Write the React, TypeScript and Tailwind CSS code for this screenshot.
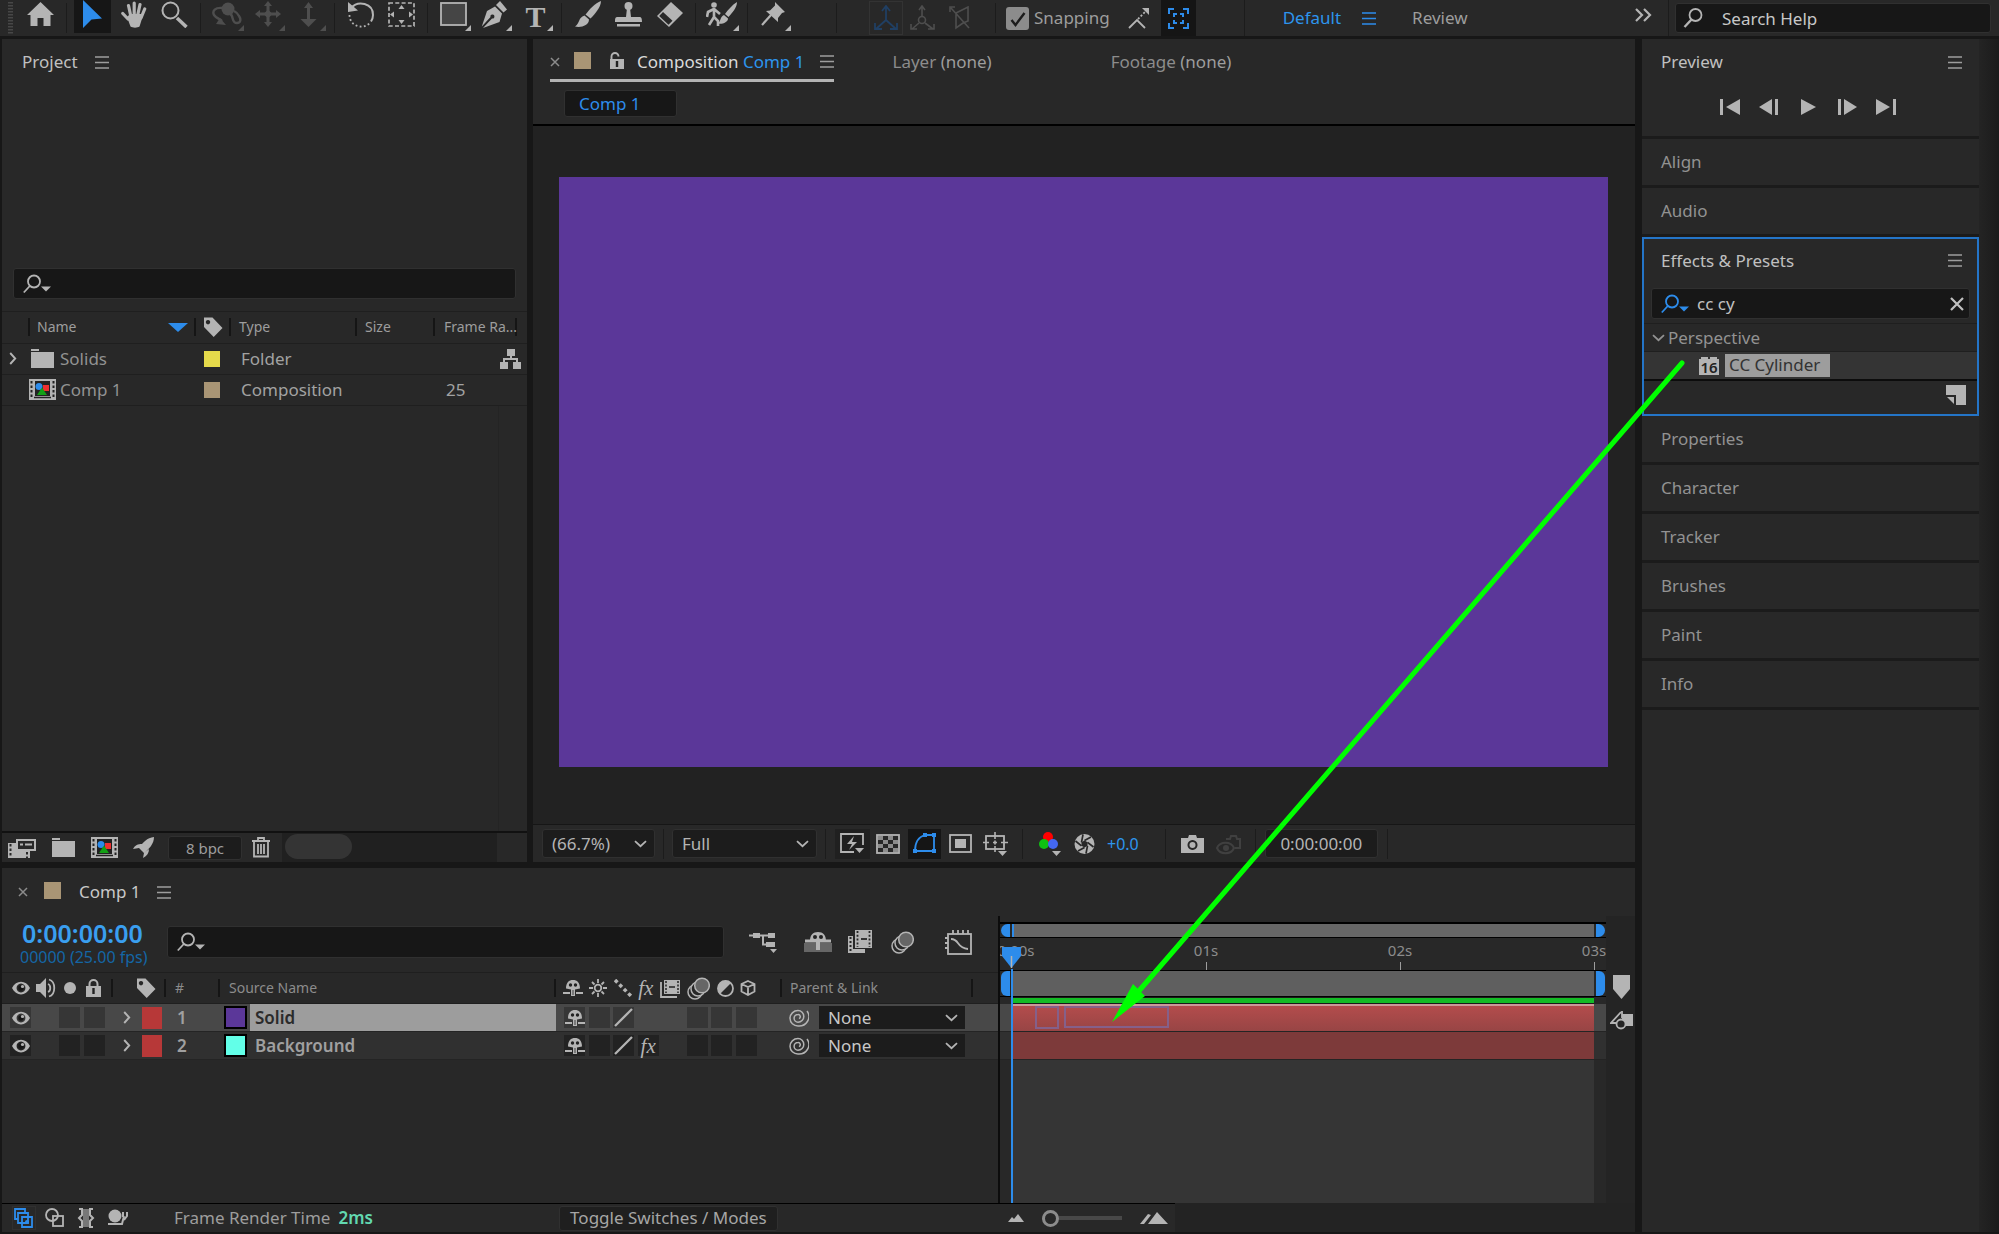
import clsx from 'clsx'
import { useState } from 'react'

type IconProps = {
  w: number
  h: number
  className?: string
  children: React.ReactNode
}

function Icon({ w, h, className, children }: IconProps) {
  return (
    <svg
      width={w}
      height={h}
      viewBox={`0 0 ${w} ${h}`}
      fill="none"
      stroke="none"
      className={clsx('shrink-0', className)}
      aria-hidden="true"
    >
      {children}
    </svg>
  )
}

const menuIcon = (
  <Icon w={14} h={13}>
    <path d="M0 1h14M0 6.5h14M0 12h14" stroke="currentColor" strokeWidth="1.6" />
  </Icon>
)

const chevronDown = (
  <Icon w={13} h={8}>
    <path d="M1 1.2l5.5 5 5.5-5" stroke="currentColor" strokeWidth="1.8" />
  </Icon>
)

const chevronRight = (
  <Icon w={8} h={13}>
    <path d="M1.2 1l5 5.5-5 5.5" stroke="currentColor" strokeWidth="1.9" />
  </Icon>
)

const searchIcon = (
  <Icon w={28} h={20}>
    <circle cx="11" cy="7.5" r="6" stroke="currentColor" strokeWidth="1.8" />
    <path d="M6.8 12L.8 18.5" stroke="currentColor" strokeWidth="1.8" />
    <path d="M18 12.5h10l-5 5z" fill="currentColor" />
  </Icon>
)

const closeIcon = (
  <Icon w={10} h={10}>
    <path d="M1 1l8 8M9 1L1 9" stroke="currentColor" strokeWidth="1.5" />
  </Icon>
)

const tagIcon = (
  <Icon w={20} h={20}>
    <path
      d="M1 .5h8.5L19.5 11l-8.800 9L1 10z M5 3a2.200 2.200 0 1 0 .01 0z"
      fill="currentColor"
      fillRule="evenodd"
    />
  </Icon>
)

const eyeIcon = (
  <Icon w={18} h={14}>
    <path
      d="M0 7C4-1.500 14-1.500 18 7C14 15.500 4 15.500 0 7z M9 2.600a4.400 4.400 0 1 0 .01 0z"
      fill="currentColor"
      fillRule="evenodd"
    />
    <path d="M9 4.300a2.700 2.700 0 1 0 2.700 2.700h-2.700z" fill="#161616" />
    <circle cx="10.500" cy="5.500" r="1.600" fill="currentColor" />
  </Icon>
)

const folderIcon = (
  <Icon w={23} h={19}>
    <path d="M0 0h8v2H0zM0 3h23v16H0z" fill="currentColor" />
  </Icon>
)

const compIcon = (
  <Icon w={27} h={21}>
    <rect width="27" height="21" fill="#b4b4b4" />
    <path d="M2.500 2v18M24.500 2v18" stroke="#222" strokeWidth="2" strokeDasharray="2.500 2" />
    <rect x="6" y="2" width="15" height="15" fill="#222" />
    <rect x="14" y="6" width="6" height="6" fill="#ee3030" />
    <circle cx="10" cy="7.500" r="3.500" fill="#2d8ceb" />
    <path d="M13 8.500l5 7.500H8z" fill="#13a015" />
    <path d="M5 18.500h17" stroke="#222" strokeWidth="1.500" />
  </Icon>
)

const shyIcon = (
  <Icon w={20} h={18}>
    <path
      d="M3 9.500C3 3.500 6 1 10 1s7 2.500 7 8.500l-5 1V17H8v-6.500z"
      fill="currentColor"
    />
    <circle cx="7.500" cy="6" r="1.700" fill="#222" />
    <circle cx="12.500" cy="6" r="1.700" fill="#222" />
    <path d="M10 11v5" stroke="#222" strokeWidth=".8" />
    <path d="M0 14h7M13 14h7" stroke="currentColor" strokeWidth="2" />
  </Icon>
)

const fxIcon = (
  <span className="font-['Liberation_Serif',serif] text-[21px] italic leading-[20px]">fx</span>
)

const framesIcon = (
  <Icon w={21} h={19}>
    <path d="M1 3v15h16" stroke="currentColor" strokeWidth="1.800" />
    <rect x="4" y="1" width="16" height="14" fill="currentColor" />
    <path d="M6 2v12M18 2v12" stroke="#222" strokeWidth="1.500" strokeDasharray="2 1.500" />
    <path d="M9 8h6" stroke="#222" strokeWidth="1.500" />
  </Icon>
)

const motionIcon = (
  <Icon w={23} h={23}>
    <circle cx="8" cy="15" r="7" fill="#282828" stroke="currentColor" strokeWidth="1.500" />
    <circle cx="11" cy="12" r="7" fill="#282828" stroke="currentColor" strokeWidth="1.500" />
    <circle cx="15" cy="8.500" r="7.300" fill="#666" stroke="currentColor" strokeWidth="1.500" />
  </Icon>
)

const slashIcon = (
  <Icon w={19} h={19}>
    <path d="M1 18L18 1" stroke="currentColor" strokeWidth="2.300" />
  </Icon>
)

const whipIcon = (
  <Icon w={20} h={18}>
    <path
      d="M18 2A10 9.500 0 0 1 9 17A8 7.700 0 0 1 9 1.600A5.800 5.800 0 0 1 9 13.200A3.900 3.900 0 0 1 9 5.400A2.200 2.200 0 0 1 10 9.600"
      stroke="currentColor"
      strokeWidth="1.500"
    />
  </Icon>
)

type ToolButtonProps = {
  label: string
  active?: boolean
  disabled?: boolean
  flyout?: boolean
  children: React.ReactNode
}

function ToolButton({ label, active, disabled, flyout, children }: ToolButtonProps) {
  return (
    <button
      type="button"
      aria-label={label}
      disabled={disabled}
      className={clsx(
        'relative flex h-[36px] w-[41px] shrink-0 items-center justify-center pb-2',
        disabled ? 'text-[#4e4e4e]' : 'text-[#b4b4b4]',
      )}
    >
      {active && <span className="absolute inset-x-[2px] top-0 bottom-[3px] bg-[#161616]" />}
      <span className="relative">{children}</span>
      {flyout && (
        <span className="absolute right-[3px] bottom-[5px]">
          <Icon w={6} h={6}>
            <path d="M6 0v6H0z" fill="currentColor" />
          </Icon>
        </span>
      )}
    </button>
  )
}

function Divider({ className }: { className?: string }) {
  return <span className={clsx('h-[30px] w-px shrink-0 bg-[#1c1c1c]', className ?? 'mx-[5px]')} />
}

function Toolbar() {
  const [snapping, setSnapping] = useState(true)

  return (
    <header className="flex h-[36px] items-center bg-[#282828] text-[17px]">
      <span className="ml-2 mr-[7px]">
        <Icon w={5} h={32}>
          <path d="M2.500 0v32" stroke="#474747" strokeWidth="5" strokeDasharray="1.500 1.500" />
        </Icon>
      </span>
      <ToolButton label="Home">
        <Icon w={27} h={26}>
          <path d="M13.500 1L27 14h-3.500v11h-7v-8h-6v8h-7V14H0z" fill="currentColor" />
        </Icon>
      </ToolButton>
      <Divider />
      <ToolButton label="Selection Tool" active>
        <Icon w={19} h={28}>
          <path d="M0 0l19 18.500-10.500 1L0 28z" fill="#2d8ceb" />
        </Icon>
      </ToolButton>
      <ToolButton label="Hand Tool">
        <Icon w={26} h={27}>
          <path
            d="M1.800 12.500L7 18M7.500 4.500L10 16M13.200 2v12M19 3.500L16.500 15M23.700 8L20 17"
            stroke="currentColor"
            strokeWidth="3.200"
            strokeLinecap="round"
          />
          <path d="M6 16l3-3h11l1.500 3-3 9.500c-2 1.500-7 1.500-9 0z" fill="currentColor" />
        </Icon>
      </ToolButton>
      <ToolButton label="Zoom Tool">
        <Icon w={27} h={27}>
          <circle cx="9.500" cy="9.500" r="8" stroke="currentColor" strokeWidth="2" />
          <path d="M16 17l9.500 9" stroke="currentColor" strokeWidth="3.500" />
        </Icon>
      </ToolButton>
      <Divider />
      <ToolButton label="Orbit Tool" disabled flyout>
        <Icon w={30} h={25}>
          <circle cx="16" cy="7" r="6.500" fill="currentColor" />
          <path
            d="M11 6C3 5 0 9 2 13c2 3 6 4 8 6M18 12c4 1 1 9 7 9c4 0 4-4 2-7c-1-2-3-4-5-5"
            stroke="currentColor"
            strokeWidth="2.400"
          />
          <path d="M4 22l4-6 6 7z" fill="currentColor" />
        </Icon>
      </ToolButton>
      <ToolButton label="Pan Camera Tool" disabled flyout>
        <Icon w={26} h={26}>
          <path d="M13 3v20M3 13h20" stroke="currentColor" strokeWidth="3" />
          <path
            d="M13 0l4 5H9zM13 26l-4-5h8zM0 13l5-4v8zM26 13l-5 4V9zM13 8.500l4.500 4.500-4.500 4.500L8.500 13z"
            fill="currentColor"
          />
        </Icon>
      </ToolButton>
      <ToolButton label="Dolly Camera Tool" disabled flyout>
        <Icon w={17} h={25}>
          <path d="M8.500 0l4.500 6H4zM8.500 25l-8-8h16zM7 4h3v14H7z" fill="currentColor" />
        </Icon>
      </ToolButton>
      <Divider />
      <ToolButton label="Rotation Tool">
        <Icon w={28} h={27}>
          <path d="M4 7C11-1 26 2 26 14c0 3-1 5-2 6.500" stroke="currentColor" strokeWidth="2" />
          <path d="M1 1v10l10-1.500z" fill="currentColor" />
          <path
            d="M2.500 14c0 12 15 15 20.500 7.500"
            stroke="currentColor"
            strokeWidth="1.800"
            strokeDasharray="1.800 2.400"
          />
        </Icon>
      </ToolButton>
      <ToolButton label="Pan Behind Tool">
        <Icon w={27} h={25}>
          <rect x="1" y="1" width="25" height="23" stroke="currentColor" strokeWidth="1.700" strokeDasharray="4 2.300" />
          <path d="M13.500 3l3 4h-6zM13.500 22l-3-4h6zM2 12.500l4-3v6zM25 12.500l-4 3v-6z" fill="currentColor" />
        </Icon>
      </ToolButton>
      <Divider />
      <ToolButton label="Rectangle Tool" flyout>
        <Icon w={27} h={24}>
          <rect x="1" y="1" width="25" height="22" fill="#454545" stroke="currentColor" strokeWidth="1.800" />
        </Icon>
      </ToolButton>
      <ToolButton label="Pen Tool" flyout>
        <Icon w={27} h={27}>
          <path d="M19 0l7 8.500-3.500 3L15 4z" fill="currentColor" />
          <path
            d="M14 5.500l7 7L18.500 21 2 27l9-9.500a2 2 0 1 0-1.500-1.500L.8 25.500 6 10z"
            fill="currentColor"
          />
        </Icon>
      </ToolButton>
      <ToolButton label="Type Tool" flyout>
        <span className="block h-[28px] font-['Liberation_Serif',serif] text-[30px] font-bold leading-[34px]">
          T
        </span>
      </ToolButton>
      <Divider />
      <ToolButton label="Brush Tool">
        <Icon w={26} h={26}>
          <path d="M26 0c0 6-6 13-10.500 17.500l-5-4C15 8 20 2 26 0z" fill="currentColor" />
          <path d="M9.500 14.500l4.500 4c0 6-8 8.500-14 7c5-3 3-9 9.500-11z" fill="currentColor" />
        </Icon>
      </ToolButton>
      <ToolButton label="Clone Stamp Tool">
        <Icon w={27} h={25}>
          <circle cx="13.500" cy="4" r="4" fill="currentColor" />
          <path d="M12 6h3l1 9h9c2 0 2 4 2 5H0c0-2 0-5 2-5h9zM2 22h23v2.500H2z" fill="currentColor" />
        </Icon>
      </ToolButton>
      <ToolButton label="Eraser Tool">
        <Icon w={28} h={27}>
          <path d="M15 1l12 11-14 14L1 15z" fill="currentColor" />
          <path d="M7 11l9.500 8.800-4 4L3.200 15z" fill="#282828" />
        </Icon>
      </ToolButton>
      <Divider />
      <ToolButton label="Roto Brush Tool" flyout>
        <Icon w={31} h={25}>
          <circle cx="8" cy="3" r="2.800" fill="currentColor" />
          <path
            d="M8 6v9M8 7l-6 3-1 5M8 7l6 5M8 15l-5 8M8 15l4 4v5"
            stroke="currentColor"
            strokeWidth="2.600"
          />
          <path d="M31 0c0 6-5 11-8.500 15l-3.500-3c3-4 7-9 12-12zM18 13l4 3.500c0 4-6 6-10 5c3-2 2-7 6-8.500z" fill="currentColor" />
        </Icon>
      </ToolButton>
      <Divider />
      <ToolButton label="Puppet Pin Tool" flyout>
        <Icon w={25} h={25}>
          <path d="M14 0l10 10-3 1-4 5 0 4L5 9l4-.5 5-5z" fill="currentColor" />
          <path d="M10 13L1 23" stroke="currentColor" strokeWidth="2.200" />
        </Icon>
      </ToolButton>
      <Divider className="mr-[32px] ml-[42px] w-[3px]" />
      <button
        type="button"
        aria-label="Local Axis Mode"
        className="flex h-[34px] w-[34px] shrink-0 items-center justify-center border border-[#333] text-[#203f63]"
      >
        <Icon w={24} h={26}>
          <path d="M12 2v13L2 24M12 15l10 9M8 6l4-5 4 5M1 18v6h7M23 18v6h-7" stroke="currentColor" strokeWidth="1.800" />
        </Icon>
      </button>
      <button type="button" aria-label="World Axis Mode" className="flex w-[38px] shrink-0 justify-center text-[#4e4e4e]">
        <Icon w={25} h={26}>
          <circle cx="12" cy="15" r="3.500" stroke="currentColor" strokeWidth="1.600" />
          <path d="M12 2v9M9 18l-7 6M15 18l8 6M9 5l3-4 3 4M1 19v5h6M24 19v5h-6" stroke="currentColor" strokeWidth="1.600" />
        </Icon>
      </button>
      <button type="button" aria-label="View Axis Mode" className="flex w-[38px] shrink-0 justify-center text-[#4e4e4e]">
        <Icon w={22} h={24}>
          <path d="M7 7l12-6v14l-5 2M7 7v15l7-5M2 2l18 20M1 6V1h5" stroke="currentColor" strokeWidth="1.600" />
        </Icon>
      </button>
      <Divider className="mr-[10px] ml-[16px]" />
      <label className="flex shrink-0 items-center gap-[5px] text-[#9d9d9d]">
        <span className="relative flex">
          <input
            type="checkbox"
            checked={snapping}
            onChange={(e) => setSnapping(e.target.checked)}
            className="h-[23px] w-[23px] appearance-none rounded-[3px] bg-[#8c8c8c]"
          />
          {snapping && (
            <span className="pointer-events-none absolute top-1 left-1">
              <Icon w={16} h={16}>
                <path d="M1.500 9l4 5L14.500 2" stroke="#1c1c1c" strokeWidth="2.400" />
              </Icon>
            </span>
          )}
        </span>
        Snapping
      </label>
      <button type="button" aria-label="Snap to edges" className="ml-[18px] flex shrink-0 text-[#b4b4b4]">
        <Icon w={22} h={22}>
          <path d="M1 21l8-8 8 8" stroke="currentColor" strokeWidth="1.800" />
          <path d="M10 12l8-8" stroke="currentColor" strokeWidth="1.800" strokeDasharray="2 1.800" />
          <path d="M14 1h7v7z" fill="currentColor" />
        </Icon>
      </button>
      <button
        type="button"
        aria-label="Snap to features"
        className="ml-[11px] flex h-[36px] w-[35px] shrink-0 items-center justify-center bg-[#151515] text-[#2d8ceb]"
      >
        <Icon w={21} h={21}>
          <path
            d="M1 6V1h5M15 1h5v5M20 15v5h-5M6 20H1v-5M6 9V6h3M12 6h3v3M15 12v3h-3M9 15H6v-3"
            stroke="currentColor"
            strokeWidth="2"
          />
        </Icon>
      </button>
      <Divider className="mr-[38px] ml-[48px] h-[36px]" />
      <button type="button" className="shrink-0 text-[#2d95ee]">
        Default
      </button>
      <button type="button" aria-label="Workspace menu" className="ml-[21px] shrink-0 text-[#2d8ceb]">
        {menuIcon}
      </button>
      <button type="button" className="ml-[36px] shrink-0 text-[#9d9d9d]">
        Review
      </button>
      <button type="button" aria-label="More workspaces" className="mr-[16px] ml-auto shrink-0 pb-[6px] text-[#b4b4b4]">
        <Icon w={17} h={14}>
          <path d="M1 1l6 6-6 6M9 1l6 6-6 6" stroke="currentColor" strokeWidth="2.200" />
        </Icon>
      </button>
      <Divider className="mr-[6px] h-[36px] w-[2px]" />
      <label className="mr-2 flex h-[30px] w-[316px] items-center gap-[19px] rounded-[3px] border border-[#303030] bg-[#171717] px-[7px] text-[#c8c8c8]">
        <Icon w={20} h={20}>
          <circle cx="12.500" cy="7" r="6" stroke="#b4b4b4" strokeWidth="1.800" />
          <path d="M8.500 11.500L1.500 19" stroke="#b4b4b4" strokeWidth="2.400" />
        </Icon>
        <input
          aria-label="Search Help"
          placeholder="Search Help"
          className="min-w-0 flex-1 bg-transparent pt-[2px] outline-none placeholder:text-[#c8c8c8]"
        />
      </label>
    </header>
  )
}

function HeadCell({ children, className }: { children?: React.ReactNode; className?: string }) {
  return (
    <th className="p-0 font-normal">
      <div className={clsx('flex h-[18px] items-center border-r-2 border-[#151515]', className)}>
        {children}
      </div>
    </th>
  )
}

const assets = [
  { name: 'Solids', icon: folderIcon, folder: true, swatch: 'bg-[#e5da4b]', type: 'Folder', rate: '' },
  { name: 'Comp 1', icon: compIcon, folder: false, swatch: 'bg-[#a99575]', type: 'Composition', rate: '25' },
]

function ProjectPanel() {
  return (
    <section className="flex w-[525px] shrink-0 flex-col bg-[#282828]">
      <div className="flex h-[46px] items-center gap-[17px] pl-5 text-[#c0c0c0]">
        <h2>Project</h2>
        <button type="button" aria-label="Project menu" className="text-[#9d9d9d]">
          {menuIcon}
        </button>
      </div>
      <label className="mx-[11px] mt-[183px] flex h-[31px] items-center rounded-[3px] border border-[#303030] bg-[#171717] px-[9px] text-[#b4b4b4]">
        {searchIcon}
        <input aria-label="Search project" className="min-w-0 flex-1 bg-transparent outline-none" />
      </label>
      <div className="mt-[12px] flex flex-1 flex-col border-t border-[#1f1f1f]">
        <table className="w-full table-fixed border-collapse text-left text-[#9d9d9d]">
          <colgroup>
            <col className="w-[194px]" />
            <col className="w-[35px]" />
            <col className="w-[126px]" />
            <col className="w-[78px]" />
            <col className="w-[82px]" />
            <col />
          </colgroup>
          <thead>
            <tr className="h-[31px] border-b border-[#1f1f1f] text-[14px]">
              <HeadCell className="pr-[6px]">
                <span className="mr-[7px] h-[18px] w-[28px] border-r-2 border-[#151515]" />
                Name
                <span className="ml-auto">
                  <Icon w={20} h={9}>
                    <path d="M0 0h20l-10 9z" fill="#2d8ceb" />
                  </Icon>
                </span>
              </HeadCell>
              <HeadCell className="justify-center text-[#b4b4b4]">{tagIcon}</HeadCell>
              <HeadCell className="pl-[8px]">Type</HeadCell>
              <HeadCell className="pl-[8px]">Size</HeadCell>
              <HeadCell className="pl-[9px] whitespace-nowrap">Frame Ra...</HeadCell>
              <th />
            </tr>
          </thead>
          <tbody>
            {assets.map((asset) => (
              <tr key={asset.name} className="h-[31px] border-b border-[#1f1f1f]">
                <td className="p-0">
                  <div className="flex items-center text-[#b4b4b4]">
                    <span className="ml-[7px] w-[20px]">{asset.folder && chevronRight}</span>
                    <span className="mr-[4px] flex w-[27px] justify-center">{asset.icon}</span>
                    <span className="text-[#929292]">{asset.name}</span>
                  </div>
                </td>
                <td className="p-0">
                  <div className={clsx('ml-2 h-[16px] w-[16px]', asset.swatch)} />
                </td>
                <td colSpan={2} className="p-0 pl-[10px] text-[#a2a2a2]">
                  {asset.type}
                </td>
                <td className="p-0 pl-[11px] text-[#a2a2a2]">{asset.rate}</td>
                <td className="relative p-0">
                  {asset.folder && (
                    <button type="button" aria-label="Flowchart" className="absolute top-[5px] right-[6px] text-[#b4b4b4]">
                      <Icon w={21} h={20}>
                        <path d="M7 0h8v7H7zM0 13h8v7H0zM13 13h8v7h-8z" fill="currentColor" />
                        <path d="M11 7v4M4 13v-3h13v3" stroke="currentColor" strokeWidth="2" />
                      </Icon>
                    </button>
                  )}
                </td>
              </tr>
            ))}
          </tbody>
        </table>
        <div className="mr-[28px] flex-1 border-r border-[#242424]" />
      </div>
      <footer className="flex h-[31px] items-center border-t-2 border-[#111] pl-[6px] text-[#b4b4b4]">
        <button type="button" aria-label="Interpret Footage">
          <Icon w={28} h={20}>
            <path d="M0 5h8v6h14v9H0z" fill="currentColor" />
            <path d="M2.500 6v13M19 14v6" stroke="#282828" strokeWidth="2" strokeDasharray="2.500 2" />
            <rect x="9" y="2" width="18" height="10" fill="#282828" stroke="currentColor" strokeWidth="2" />
            <path d="M12 6.500h3M17 6.500h7" stroke="currentColor" strokeWidth="2" />
          </Icon>
        </button>
        <button type="button" aria-label="New Folder" className="ml-4">
          {folderIcon}
        </button>
        <button type="button" aria-label="New Composition" className="ml-4">
          {compIcon}
        </button>
        <button type="button" aria-label="Adjust proxy" className="ml-[15px]">
          <Icon w={21} h={21}>
            <path d="M21 0c0 7-5 12-10 16l-5-5C10 5 14 1 21 0zM9 7l-3 4-6 1c2-4 5-5 9-5zM10 21l1-5 5-4c0 4-2 7-6 9z" fill="currentColor" />
          </Icon>
        </button>
        <button
          type="button"
          className="ml-[14px] h-[24px] w-[74px] rounded-[3px] border border-[#303030] bg-[#1c1c1c] text-[15px] leading-[22px] text-[#9d9d9d]"
        >
          8 bpc
        </button>
        <button type="button" aria-label="Delete" className="ml-[10px]">
          <Icon w={18} h={21}>
            <path d="M0 4h18M6 4V1h6v3M2 4v15.500h14V4M6 7v10M9 7v10M12 7v10" stroke="currentColor" strokeWidth="1.800" />
          </Icon>
        </button>
        <div className="mr-[30px] ml-[12px] h-[29px] flex-1 bg-[#202020] px-[3px] pt-px pb-[3px]">
          <div className="h-full w-[67px] rounded-full bg-[#343434]" />
        </div>
      </footer>
    </section>
  )
}

type SelectBoxProps = {
  label: string
  options: string[]
  className?: string
}

function SelectBox({ label, options, className }: SelectBoxProps) {
  return (
    <span className={clsx('relative flex shrink-0 items-center', className)}>
      <select aria-label={label} className="h-full w-full appearance-none bg-transparent pl-[9px] outline-none">
        {options.map((option) => (
          <option key={option}>{option}</option>
        ))}
      </select>
      <span className="pointer-events-none absolute right-[7px] text-[#b4b4b4]">{chevronDown}</span>
    </span>
  )
}

function CompositionPanel() {
  return (
    <section className="flex min-w-0 flex-1 flex-col bg-[#282828]">
      <div className="flex h-[43px] text-[#8c8c8c]">
        <div className="ml-[17px] flex shrink-0 items-center border-b-[3px] border-[#b4b4b4] pt-[5px] text-[#dadada]">
          <button type="button" aria-label="Close tab" className="text-[#8c8c8c]">
            {closeIcon}
          </button>
          <span className="mr-px mb-[3px] ml-[14px] h-[17px] w-[17px] bg-[#a99575]" />
          <button type="button" aria-label="Lock" className="mr-[13px] mb-[3px] ml-[17px] text-[#b4b4b4]">
            <Icon w={15} h={17}>
              <path d="M2.500 8V4.500a3.500 3.500 0 0 1 7 0" stroke="currentColor" strokeWidth="1.900" />
              <path d="M1 7h14v10H1z" fill="currentColor" />
              <path d="M8 9v6" stroke="#222" strokeWidth="2.400" />
            </Icon>
          </button>
          <h2>
            Composition <span className="text-[#2d95ee]">Comp 1</span>
          </h2>
          <button type="button" aria-label="Composition menu" className="ml-[16px] text-[#9d9d9d]">
            {menuIcon}
          </button>
        </div>
        <button type="button" className="ml-[58px] shrink-0 pt-[3px]">
          Layer <span className="text-[#9d9d9d]">(none)</span>
        </button>
        <button type="button" className="ml-[119px] shrink-0 pt-[3px]">
          Footage <span className="text-[#9d9d9d]">(none)</span>
        </button>
      </div>
      <div className="h-[44px] border-b-2 border-black px-[31px] pt-2">
        <button
          type="button"
          className="h-[27px] w-[113px] rounded-[3px] border border-[#303030] bg-[#171717] pl-[14px] text-left leading-[22px] text-[#2d8ceb]"
        >
          Comp 1
        </button>
      </div>
      <div className="flex-1 bg-[#222] pt-[51px] pr-[27px] pb-[57px] pl-[26px]">
        <div className="aspect-[1049/590] bg-[#5b3799]" />
      </div>
      <footer className="flex h-[38px] shrink-0 items-center border-t border-[#161616] pl-[9px] text-[#b4b4b4]">
        <SelectBox
          label="Magnification"
          options={['(66.7%)', '50%', '100%']}
          className="h-[29px] w-[113px] rounded-[3px] border border-[#303030] bg-[#1c1c1c] text-[#b4b4b4]"
        />
        <Divider className="mx-2 h-[24px]" />
        <SelectBox
          label="Resolution"
          options={['Full', 'Half', 'Quarter']}
          className="h-[29px] w-[145px] rounded-[3px] border border-[#303030] bg-[#1c1c1c] text-[#b4b4b4]"
        />
        <Divider className="mx-[8px] h-[24px]" />
        <button type="button" aria-label="Fast Previews" className="ml-px flex h-[30px] w-[35px] items-center justify-center bg-[#202020]">
          <Icon w={25} h={21}>
            <path d="M14 19H1V1h22v11" stroke="currentColor" strokeWidth="1.800" />
            <path d="M14 3l-7 8h5l-3 6 8-8h-5z" fill="currentColor" />
            <path d="M15 15h9l-4.500 5z" fill="currentColor" />
          </Icon>
        </button>
        <button type="button" aria-label="Transparency Grid" className="ml-[6px]">
          <Icon w={24} h={20}>
            <rect x="1" y="1" width="22" height="18" stroke="currentColor" strokeWidth="1.800" />
            <path
              d="M2 2h5v4H2zM12 2h5v4h-5zM7 6h5v4H7zM17 6h5v4h-5zM2 10h5v4H2zM12 10h5v4h-5zM7 14h5v4H7zM17 14h5v4h-5z"
              fill="#8c8c8c"
            />
          </Icon>
        </button>
        <button type="button" aria-label="Mask Visibility" className="ml-2 flex h-[30px] w-[33px] items-center justify-center bg-[#151515] text-[#2d8ceb]">
          <Icon w={24} h={21}>
            <path d="M2 18C2 10 5 4 12 2h9v16z" stroke="currentColor" strokeWidth="1.800" />
            <path d="M0 16h4v4H0zM19 16h4v4h-4zM19 0h4v4h-4zM10 0h4v4h-4z" fill="currentColor" />
          </Icon>
        </button>
        <button type="button" aria-label="Region of Interest" className="ml-2">
          <Icon w={23} h={19}>
            <rect x="1" y="1" width="21" height="17" stroke="currentColor" strokeWidth="1.800" />
            <path d="M6 5h11v9H6z" fill="currentColor" />
          </Icon>
        </button>
        <button type="button" aria-label="Guides" className="ml-[11px]">
          <Icon w={25} h={24}>
            <rect x="3" y="4" width="18" height="13" stroke="currentColor" strokeWidth="1.800" />
            <path d="M12 0v7M12 14v6M0 10.500h6M18 10.500h7M10 10.500h4M12 8.500v4" stroke="currentColor" strokeWidth="1.600" />
            <path d="M15 19h9l-4.500 5z" fill="currentColor" />
          </Icon>
        </button>
        <Divider className="mr-4 ml-[14px] h-[24px]" />
        <button type="button" aria-label="Channels">
          <Icon w={22} h={24}>
            <circle cx="9" cy="5" r="5" fill="#f00" />
            <circle cx="5" cy="12" r="5" fill="#0fc112" />
            <circle cx="14" cy="12" r="5" fill="#4468f0" />
            <path d="M13 19h9l-4.500 5z" fill="currentColor" />
          </Icon>
        </button>
        <button type="button" aria-label="Reset Exposure" className="ml-[13px]">
          <Icon w={21} h={20}>
            <circle cx="10.500" cy="10" r="10" fill="currentColor" />
            <path d="M10.500 6.500l3 1.800v3.500l-3 1.800-3-1.800V8.300z" fill="#282828" />
            <path
              d="M10.500 6.500L17 3M13.500 8.300L19.500 13M13.500 11.800L12 19.500M10.500 13.500L4 17M7.500 11.800L1.500 7M7.500 8.300L9 .5"
              stroke="#282828"
              strokeWidth="1.700"
            />
          </Icon>
        </button>
        <button type="button" className="ml-[12px] text-[16px] text-[#2d95ee]">
          +0.0
        </button>
        <Divider className="mr-[15px] ml-[26px] h-[24px]" />
        <button type="button" aria-label="Take Snapshot">
          <Icon w={23} h={18}>
            <path d="M0 3h7l1-3h7l1 3h7v15H0zM11.500 5a5 5 0 1 0 .01 0z" fill="currentColor" fillRule="evenodd" />
            <circle cx="11.500" cy="10" r="3" fill="currentColor" />
          </Icon>
        </button>
        <button type="button" aria-label="Show Snapshot" disabled className="ml-[12px] text-[#404040]">
          <Icon w={25} h={22}>
            <path d="M1 15C4 8 15 8 18 15C15 22 4 22 1 15z" stroke="currentColor" strokeWidth="2" />
            <circle cx="10" cy="15" r="3" fill="currentColor" />
            <path d="M10 6h4l1-3h5l1 3h3v9h-5" stroke="currentColor" strokeWidth="2" />
          </Icon>
        </button>
        <Divider className="mr-[9px] ml-[14px] h-[24px]" />
        <button type="button" className="h-[29px] w-[113px] rounded-[3px] border border-[#303030] bg-[#1c1c1c] text-[17px] leading-[26px]">
          0:00:00:00
        </button>
        <Divider className="ml-[9px] h-[24px]" />
      </footer>
    </section>
  )
}

const layers = [
  {
    index: 1,
    name: 'Solid',
    swatch: 'bg-[#5b3799]',
    selected: true,
    fx: false,
  },
  {
    index: 2,
    name: 'Background',
    swatch: 'bg-[#62ffe8]',
    selected: false,
    fx: true,
  },
]

function SwitchCell({ selected, children }: { selected: boolean; children?: React.ReactNode }) {
  return (
    <span
      className={clsx(
        'flex h-[21px] w-[21px] items-center justify-center',
        selected ? 'bg-[#363636]' : 'bg-[#222]',
      )}
    >
      {children}
    </span>
  )
}

function LayerTable() {
  return (
    <table className="w-full table-fixed border-collapse text-left">
      <colgroup>
        <col className="w-[111px]" />
        <col className="w-[53px]" />
        <col className="w-[54px]" />
        <col className="w-[336px]" />
        <col className="w-[226px]" />
        <col className="w-[191px]" />
        <col />
      </colgroup>
      <thead>
        <tr className="h-[31px] border-t border-b border-[#1f1f1f] text-[14px] text-[#8c8c8c]">
          <HeadCell className="gap-[6px] pl-[10px] text-[#b4b4b4]">
            {eyeIcon}
            <Icon w={20} h={20}>
              <path d="M0 6h4l6-6v20l-6-6H0z" fill="currentColor" />
              <path d="M12 6c3 1 3 7 0 8M13 1.500c7 2 7 15 0 17" stroke="currentColor" strokeWidth="1.800" />
            </Icon>
            <span className="ml-[2px] h-[12px] w-[12px] rounded-full bg-[#b4b4b4]" />
            <span className="ml-[4px]">
              <Icon w={15} h={18}>
                <path d="M3.500 8V5a4 4 0 0 1 8 0v3" stroke="currentColor" strokeWidth="2" />
                <path d="M0 7h15v11H0z" fill="currentColor" />
                <path d="M7.500 9v6" stroke="#222" strokeWidth="2.400" />
              </Icon>
            </span>
          </HeadCell>
          <HeadCell className="justify-end pr-2 text-[#b4b4b4]">{tagIcon}</HeadCell>
          <HeadCell className="pl-[9px]">#</HeadCell>
          <HeadCell className="pl-[9px]">Source Name</HeadCell>
          <HeadCell className="pl-[7px] text-[#b4b4b4]">
            <span className="flex w-[193px] items-center justify-between">
              {shyIcon}
              <Icon w={18} h={18}>
                <circle cx="9" cy="9" r="3.300" stroke="currentColor" strokeWidth="1.800" />
                <path
                  d="M9 0v4M9 14v4M0 9h4M14 9h4M3 3l2.500 2.500M12.500 12.500L15 15M15 3l-2.500 2.500M5.500 12.500L3 15"
                  stroke="currentColor"
                  strokeWidth="1.800"
                />
              </Icon>
              <Icon w={18} h={18}>
                <path d="M1 1l16 16" stroke="currentColor" strokeWidth="3.500" strokeDasharray="3.500 2.800" />
              </Icon>
              {fxIcon}
              {framesIcon}
              {motionIcon}
              <Icon w={17} h={17}>
                <circle cx="8.500" cy="8.500" r="7.500" stroke="currentColor" strokeWidth="1.800" />
                <path d="M14 3a7.500 7.500 0 0 0-11 11z" fill="currentColor" />
              </Icon>
              <Icon w={16} h={16}>
                <path d="M8 1l6.500 3v7.500L8 15l-6.500-3.500V4zM1.500 4L8 7l6.500-3M8 7v8" stroke="currentColor" strokeWidth="1.800" />
              </Icon>
            </span>
          </HeadCell>
          <HeadCell className="pl-[8px]">Parent &amp; Link</HeadCell>
          <th />
        </tr>
      </thead>
      <tbody>
        {layers.map((layer) => (
          <tr
            key={layer.index}
            className={clsx(
              'h-[28px] border-b border-[#242424] text-[#b4b4b4]',
              layer.selected ? 'bg-[#484848]' : 'bg-[#303030]',
            )}
          >
            <td className="p-0">
              <div className="flex gap-1 pl-2">
                <SwitchCell selected={layer.selected}>{eyeIcon}</SwitchCell>
                <span className="w-[20px]" />
                <SwitchCell selected={layer.selected} />
                <SwitchCell selected={layer.selected} />
              </div>
            </td>
            <td className="p-0">
              <div className="flex items-center pl-[10px]">
                {chevronRight}
                <span className="ml-[11px] h-[22px] w-[20px] bg-[#b73838]" />
              </div>
            </td>
            <td className="p-0 pl-[11px] font-semibold text-[#a0a0a0]">{layer.index}</td>
            <td className="p-0">
              <div className="flex items-center pl-[4px]">
                <span className={clsx('mr-[3px] h-[23px] w-[23px] border-2 border-black', layer.swatch)} />
                <span
                  className={clsx(
                    'h-[27px] flex-1 pl-[5px] leading-[27px] font-semibold',
                    layer.selected ? 'bg-[#9d9d9d] text-[#2b2b2b]' : 'text-[#a0a0a0]',
                  )}
                >
                  {layer.name}
                </span>
              </div>
            </td>
            <td className="p-0">
              <div className="ml-[8px] flex w-[193px] justify-between">
                <SwitchCell selected={layer.selected}>{shyIcon}</SwitchCell>
                <SwitchCell selected={layer.selected} />
                <SwitchCell selected={layer.selected}>{slashIcon}</SwitchCell>
                {layer.fx ? <SwitchCell selected={false}>{fxIcon}</SwitchCell> : <span className="w-[21px]" />}
                <span className="w-[21px]" />
                <SwitchCell selected={layer.selected} />
                <SwitchCell selected={layer.selected} />
                <SwitchCell selected={layer.selected} />
              </div>
            </td>
            <td className="p-0">
              <div className="flex items-center gap-[10px] pl-[7px]">
                {whipIcon}
                <SelectBox
                  label={`Parent of ${layer.name}`}
                  options={['None', ...layers.filter((l) => l !== layer).map((l) => l.name)]}
                  className="h-[23px] w-[146px] bg-[#1c1c1c] text-[#c8c8c8]"
                />
              </div>
            </td>
            <td />
          </tr>
        ))}
      </tbody>
    </table>
  )
}

const seconds = [
  { label: '0:00s', place: 'left-1', tick: false },
  { label: '01s', place: 'left-1/3', tick: true },
  { label: '02s', place: 'left-2/3', tick: true },
  { label: '03s', place: 'left-full', tick: true },
]

function TimeGraph() {
  return (
    <div className="relative flex min-w-0 flex-1 flex-col overflow-hidden pt-[6px]">
      <div className="flex h-[16px] gap-[2px] border-t-2 border-b border-black px-px">
        <span className="w-[9px] rounded-l-full bg-[#2d8ceb]" />
        <span className="flex-1 border-l-2 border-[#2d8ceb] bg-[#666]" />
        <span className="w-[9px] rounded-r-full bg-[#2d8ceb]" />
      </div>
      <div className="relative mx-[12px] h-[32px] text-[15px] text-[#8c8c8c]">
        {seconds.map((second) => (
          <span
            key={second.label}
            className={clsx('absolute top-[2px] flex h-[30px] w-0 flex-col items-center justify-between', second.place)}
          >
            <span className="leading-[20px]">{second.label}</span>
            {second.tick && <span className="h-[8px] w-px shrink-0 bg-[#9d9d9d]" />}
          </span>
        ))}
      </div>
      <div className="flex h-[27px] gap-[2px] border-t border-b border-black px-px">
        <span className="w-[9px] rounded-l-md bg-[#2d8ceb]" />
        <span className="flex-1 bg-[#5f5f5f]" />
        <span className="w-[9px] rounded-r-md bg-[#2d8ceb]" />
      </div>
      <div className="mx-[12px] h-[7px] border-t border-b border-[#1a1a1a] bg-[#14bb26]" />
      <div className="h-[28px] border-b border-[#242424] bg-[#484848] px-[12px]">
        <div className="relative h-full border-t-2 border-[#c99] bg-linear-to-b from-[#b34c4c] to-[#984545]">
          <span className="absolute top-0 left-[4%] h-[23px] w-[4%] border-2 border-[#85608a]" />
          <span className="absolute top-0 left-[9%] h-[22px] w-[18%] border-2 border-[#85608a]" />
        </div>
      </div>
      <div className="h-[28px] border-b border-[#242424] bg-[#303030] px-[12px]">
        <div className="h-full bg-[#7d3a3a]" />
      </div>
      <div className="flex flex-1 flex-col px-[12px]">
        <div className="flex-1 bg-[#353535]" />
      </div>
      <div className="absolute top-[31px] bottom-0 left-[1px] flex w-[21px] flex-col items-center text-[#2d8ceb]">
        <Icon w={21} h={22}>
          <path d="M1 0h19v9l-9.500 12L1 9z" fill="currentColor" />
          <path d="M10.500 9v12" stroke="#b4b4b4" strokeWidth="1.500" />
        </Icon>
        <span className="w-[2px] flex-1 bg-[#2d8ceb]" />
      </div>
    </div>
  )
}

function TimelinePanel() {
  return (
    <section className="flex flex-1 flex-col bg-[#282828]">
      <div className="flex h-[48px] items-center pl-4 text-[#c8c8c8]">
        <button type="button" aria-label="Close tab" className="text-[#8c8c8c]">
          {closeIcon}
        </button>
        <span className="mr-[18px] ml-4 mb-[3px] h-[17px] w-[17px] bg-[#a99575]" />
        <h2>Comp 1</h2>
        <button type="button" aria-label="Timeline menu" className="ml-[16px] text-[#9d9d9d]">
          {menuIcon}
        </button>
      </div>
      <div className="flex flex-1">
        <div className="flex w-[998px] shrink-0 flex-col border-r-2 border-[#0c0c0c]">
          <div className="flex h-[56px] shrink-0 pr-[26px] text-[#b4b4b4]">
            <div className="w-[165px] pl-[20px] pt-[4px]">
              <div className="text-[25px] leading-[26px] font-semibold text-[#3a9ff0]">0:00:00:00</div>
              <div className="ml-[-2px] text-[16px] leading-[22px] text-[#1466a5]">00000 (25.00 fps)</div>
            </div>
            <label className="mt-[10px] flex h-[32px] w-[557px] items-center rounded-[3px] border border-[#303030] bg-[#171717] px-[9px]">
              {searchIcon}
              <input aria-label="Search layers" className="min-w-0 flex-1 bg-transparent outline-none" />
            </label>
            <div className="flex flex-1 items-center justify-between pb-1 pl-[25px]">
              <button type="button" aria-label="Composition Mini-Flowchart">
                <Icon w={28} h={22}>
                  <path d="M0 4.500h26M14 4.500v9h7" stroke="currentColor" strokeWidth="2" />
                  <path d="M4 2h7v5H4zM19 2h7v5h-7zM17 11h9v5h-9zM21 18h7l-3.500 4z" fill="currentColor" />
                </Icon>
              </button>
              <button type="button" aria-label="Hide Shy Layers" className="ml-[20px]">
                <Icon w={28} h={22}>
                  <path d="M0 12h28v9H0z" fill="#666" />
                  <path d="M6 10C6 4 9 1 14 1s8 3 8 9l3 1H3z" fill="currentColor" />
                  <path d="M1 10h26" stroke="currentColor" strokeWidth="3" />
                  <circle cx="11" cy="6" r="2" fill="#222" />
                  <circle cx="17" cy="6" r="2" fill="#222" />
                  <path d="M14 9v10" stroke="currentColor" strokeWidth="4" />
                </Icon>
              </button>
              <button type="button" aria-label="Frame Blending" className="ml-[10px]">
                <Icon w={24} h={24}>
                  <path d="M0 6h5v13h12v4H0z" fill="currentColor" />
                  <path d="M2.500 7v15" stroke="#282828" strokeWidth="2" strokeDasharray="2 2" />
                  <path d="M7 0h17v18H7z" fill="currentColor" />
                  <path d="M9.500 1v16M21.500 1v16" stroke="#282828" strokeWidth="1.800" strokeDasharray="2 1.800" />
                  <path d="M13 9h6" stroke="#282828" strokeWidth="1.800" />
                </Icon>
              </button>
              <button type="button" aria-label="Motion Blur" className="ml-[12px]">
                {motionIcon}
              </button>
              <button type="button" aria-label="Graph Editor" className="ml-[25px]">
                <Icon w={27} h={25}>
                  <rect x="3" y="4" width="23" height="20" stroke="currentColor" strokeWidth="1.800" />
                  <path
                    d="M8 0v4M13 0v4M18 0v4M23 0v4M0 8h3M0 13h3M0 18h3M6 9c9 0 5 9 17 10"
                    stroke="currentColor"
                    strokeWidth="1.800"
                  />
                </Icon>
              </button>
            </div>
          </div>
          <LayerTable />
        </div>
        <TimeGraph />
        <div className="flex w-[29px] shrink-0 flex-col items-center gap-[11px] bg-[#242424] pt-[59px] pl-px text-[#b4b4b4]">
          <Icon w={19} h={24}>
            <path d="M1 0h17v14l-8.500 10L1 14z" fill="currentColor" />
          </Icon>
          <Icon w={23} h={20}>
            <path d="M12 4h11v12H12z" fill="currentColor" />
            <path d="M11 2L1 13h7" stroke="currentColor" strokeWidth="1.800" />
            <path d="M12 1v7" stroke="currentColor" strokeWidth="1.800" />
            <circle cx="11" cy="14" r="4.500" fill="#242424" stroke="currentColor" strokeWidth="1.800" />
          </Icon>
        </div>
      </div>
      <footer className="flex h-[29px] shrink-0 items-center bg-[#232323] text-[#9d9d9d]">
        <div className="flex h-full w-[1173px] shrink-0 items-center border-t border-black bg-[#282828] pl-[10px]">
          <button type="button" aria-label="Layer Switches" className="border border-[#303030] px-px py-px text-[#2d8ceb]">
            <Icon w={20} h={20}>
              <path d="M1 1h10v10H1z" stroke="currentColor" strokeWidth="1.800" />
              <path d="M4 5h10v10H4zM8 9h10v10H8z" fill="#282828" stroke="currentColor" strokeWidth="1.800" />
              <circle cx="13" cy="14" r="2" fill="currentColor" />
            </Icon>
          </button>
          <button type="button" aria-label="Transfer Controls" className="ml-[9px]">
            <Icon w={19} h={20}>
              <circle cx="7" cy="7" r="6" stroke="#b4b4b4" strokeWidth="1.800" />
              <rect x="8" y="8" width="10" height="10" stroke="#b4b4b4" strokeWidth="1.800" />
            </Icon>
          </button>
          <button type="button" aria-label="In and Out" className="ml-[13px]">
            <Icon w={18} h={20}>
              <path d="M6 1h6v18H6z" fill="#777" />
              <path d="M5 1v6l-3 3 3 3v6M13 1v6l3 3-3 3v6M2 1h4M2 19h4M12 1h4M12 19h4" stroke="#b4b4b4" strokeWidth="2" />
            </Icon>
          </button>
          <button type="button" aria-label="Render Time" className="ml-[12px]">
            <Icon w={22} h={18}>
              <circle cx="8" cy="7" r="6.500" fill="#b4b4b4" />
              <path d="M1 15h14l2-8M20 3v4l-3 4M16 3v5" stroke="#b4b4b4" strokeWidth="2" />
            </Icon>
          </button>
          <span className="ml-[45px]">Frame Render Time</span>
          <span className="ml-[8px] font-semibold text-[#62d8b0]">2ms</span>
          <button
            type="button"
            className="mr-auto ml-[186px] h-[25px] w-[219px] rounded-[3px] border border-[#303030] bg-[#1f1f1f] leading-[22px] text-[#a6a6a6]"
          >
            Toggle Switches / Modes
          </button>
          <Icon w={16} h={8}>
            <path d="M0 8l4-5 2 2 4-5 6 8z" fill="#b4b4b4" />
          </Icon>
          <input
            type="range"
            aria-label="Zoom"
            defaultValue={0}
            className="mx-[18px] h-[4px] w-[80px] appearance-none bg-[#484848] [&::-webkit-slider-thumb]:h-[17px] [&::-webkit-slider-thumb]:w-[17px] [&::-webkit-slider-thumb]:appearance-none [&::-webkit-slider-thumb]:rounded-full [&::-webkit-slider-thumb]:border-[3px] [&::-webkit-slider-thumb]:border-[#8c8c8c] [&::-webkit-slider-thumb]:bg-[#282828]"
          />
          <span className="mr-[7px]">
            <Icon w={28} h={12}>
              <path d="M0 12l8-10 3 1-7 9zM8 12l9-12 11 12z" fill="#b4b4b4" />
            </Icon>
          </span>
        </div>
      </footer>
    </section>
  )
}

const transport = [
  { label: 'First Frame', d: 'M0 0h3v16H0zM20 0v16L6 8z' },
  { label: 'Previous Frame', d: 'M13 0v16L0 8zM16 0h3v16h-3z' },
  { label: 'Play', d: 'M3 0l15 8-15 8z' },
  { label: 'Next Frame', d: 'M1 0h3v16H1zM7 0l13 8-13 8z' },
  { label: 'Last Frame', d: 'M0 0l14 8-14 8zM17 0h3v16h-3z' },
]

function PanelRow({ title }: { title: string }) {
  return (
    <button
      type="button"
      className="flex h-[49px] w-full items-center border-b-[3px] border-[#1b1b1b] pl-[19px] text-left text-[#929292]"
    >
      {title}
    </button>
  )
}

function EffectsPanel() {
  const [query, setQuery] = useState('cc cy')

  return (
    <section className="flex h-[179px] flex-col border-2 border-[#2475c8]">
      <div className="flex h-[46px] shrink-0 items-center justify-between pr-[15px] pb-[3px] pl-[17px] text-[#c0c0c0]">
        <h2>Effects &amp; Presets</h2>
        <button type="button" aria-label="Effects menu" className="text-[#9d9d9d]">
          {menuIcon}
        </button>
      </div>
      <label className="mx-[7px] mt-[3px] flex h-[31px] shrink-0 items-center gap-[8px] rounded-[3px] border border-[#303030] bg-[#171717] px-[9px] text-[#2d8ceb]">
        {searchIcon}
        <input
          aria-label="Search effects"
          value={query}
          onChange={(e) => setQuery(e.target.value)}
          className="min-w-0 flex-1 bg-transparent text-[#c0c0c0] outline-none"
        />
        <button type="button" aria-label="Clear search" onClick={() => setQuery('')} className="mr-[-4px] text-[#c0c0c0]">
          <Icon w={14} h={14}>
            <path d="M1 1l12 12M13 1L1 13" stroke="currentColor" strokeWidth="2.200" />
          </Icon>
        </button>
      </label>
      <div className="mt-[4px] flex h-[29px] shrink-0 items-center gap-[3px] border-t border-b border-[#1f1f1f] pl-[8px] text-[#929292]">
        {chevronDown}
        Perspective
      </div>
      <div className="flex h-[29px] shrink-0 items-center gap-[6px] border-b-2 border-[#0c0c0c] bg-[#343434] pl-[55px]">
        <span className="relative flex h-[18px] w-[20px] items-end justify-center bg-[#b4b4b4] text-[15px] leading-[16px] font-semibold text-[#222]">
          <span className="absolute top-0 left-0 h-[2px] w-[2px] bg-[#343434]" />
          <span className="absolute top-0 left-[9px] h-[2px] w-[2px] bg-[#343434]" />
          <span className="absolute top-0 right-0 h-[2px] w-[2px] bg-[#343434]" />
          16
        </span>
        <span className="h-[23px] w-[105px] bg-[#9d9d9d] pl-[4px] leading-[22px] text-[#333]">CC Cylinder</span>
      </div>
      <div className="flex flex-1 items-start justify-end pt-[4px] pr-[11px]">
        <button type="button" aria-label="New preset">
          <Icon w={20} h={20}>
            <path d="M0 0h20v20H10V10H0z" fill="#b4b4b4" />
            <path d="M1 12h7v7z" fill="#b4b4b4" />
          </Icon>
        </button>
      </div>
    </section>
  )
}

function Sidebar() {
  return (
    <aside className="w-[337px] shrink-0 bg-[#282828]">
      <section className="h-[100px] border-b-[3px] border-[#1b1b1b]">
        <div className="flex h-[46px] items-center justify-between pr-[17px] pl-[19px] text-[#c0c0c0]">
          <h2>Preview</h2>
          <button type="button" aria-label="Preview menu" className="text-[#9d9d9d]">
            {menuIcon}
          </button>
        </div>
        <div className="flex justify-center gap-[19px] pt-[14px] pr-[6px] text-[#b4b4b4]">
          {transport.map((button) => (
            <button key={button.label} type="button" aria-label={button.label}>
              <Icon w={20} h={16}>
                <path d={button.d} fill="currentColor" />
              </Icon>
            </button>
          ))}
        </div>
      </section>
      <PanelRow title="Align" />
      <PanelRow title="Audio" />
      <EffectsPanel />
      {['Properties', 'Character', 'Tracker', 'Brushes', 'Paint', 'Info'].map((title) => (
        <PanelRow key={title} title={title} />
      ))}
    </aside>
  )
}

export default function App() {
  return (
    <div className="relative flex min-h-screen flex-col overflow-hidden bg-[#171717] font-['Noto_Sans',sans-serif] text-[17px] leading-[24px]">
      <Toolbar />
      <main className="flex flex-1 gap-[7px] pt-[3px] pb-[2px] pl-[2px]">
        <div className="flex min-w-0 flex-1 flex-col gap-[6px]">
          <div className="flex gap-[6px]">
            <ProjectPanel />
            <CompositionPanel />
          </div>
          <TimelinePanel />
        </div>
        <div className="flex">
          <Sidebar />
          <div className="w-[20px] shrink-0 bg-linear-to-r from-[#242424] to-[#1b1b1b]" />
        </div>
      </main>
      {/* drag from the effect to its layer */}
      <svg
        className="pointer-events-none absolute inset-0 h-full w-full"
        viewBox="0 0 1999 1234"
        preserveAspectRatio="none"
        aria-hidden="true"
      >
        <path d="M1682 363L1138 992" stroke="#0f0" strokeWidth="5" strokeLinecap="round" />
        <path d="M1112 1022L1133 984l12 12z" fill="#0f0" />
      </svg>
    </div>
  )
}
